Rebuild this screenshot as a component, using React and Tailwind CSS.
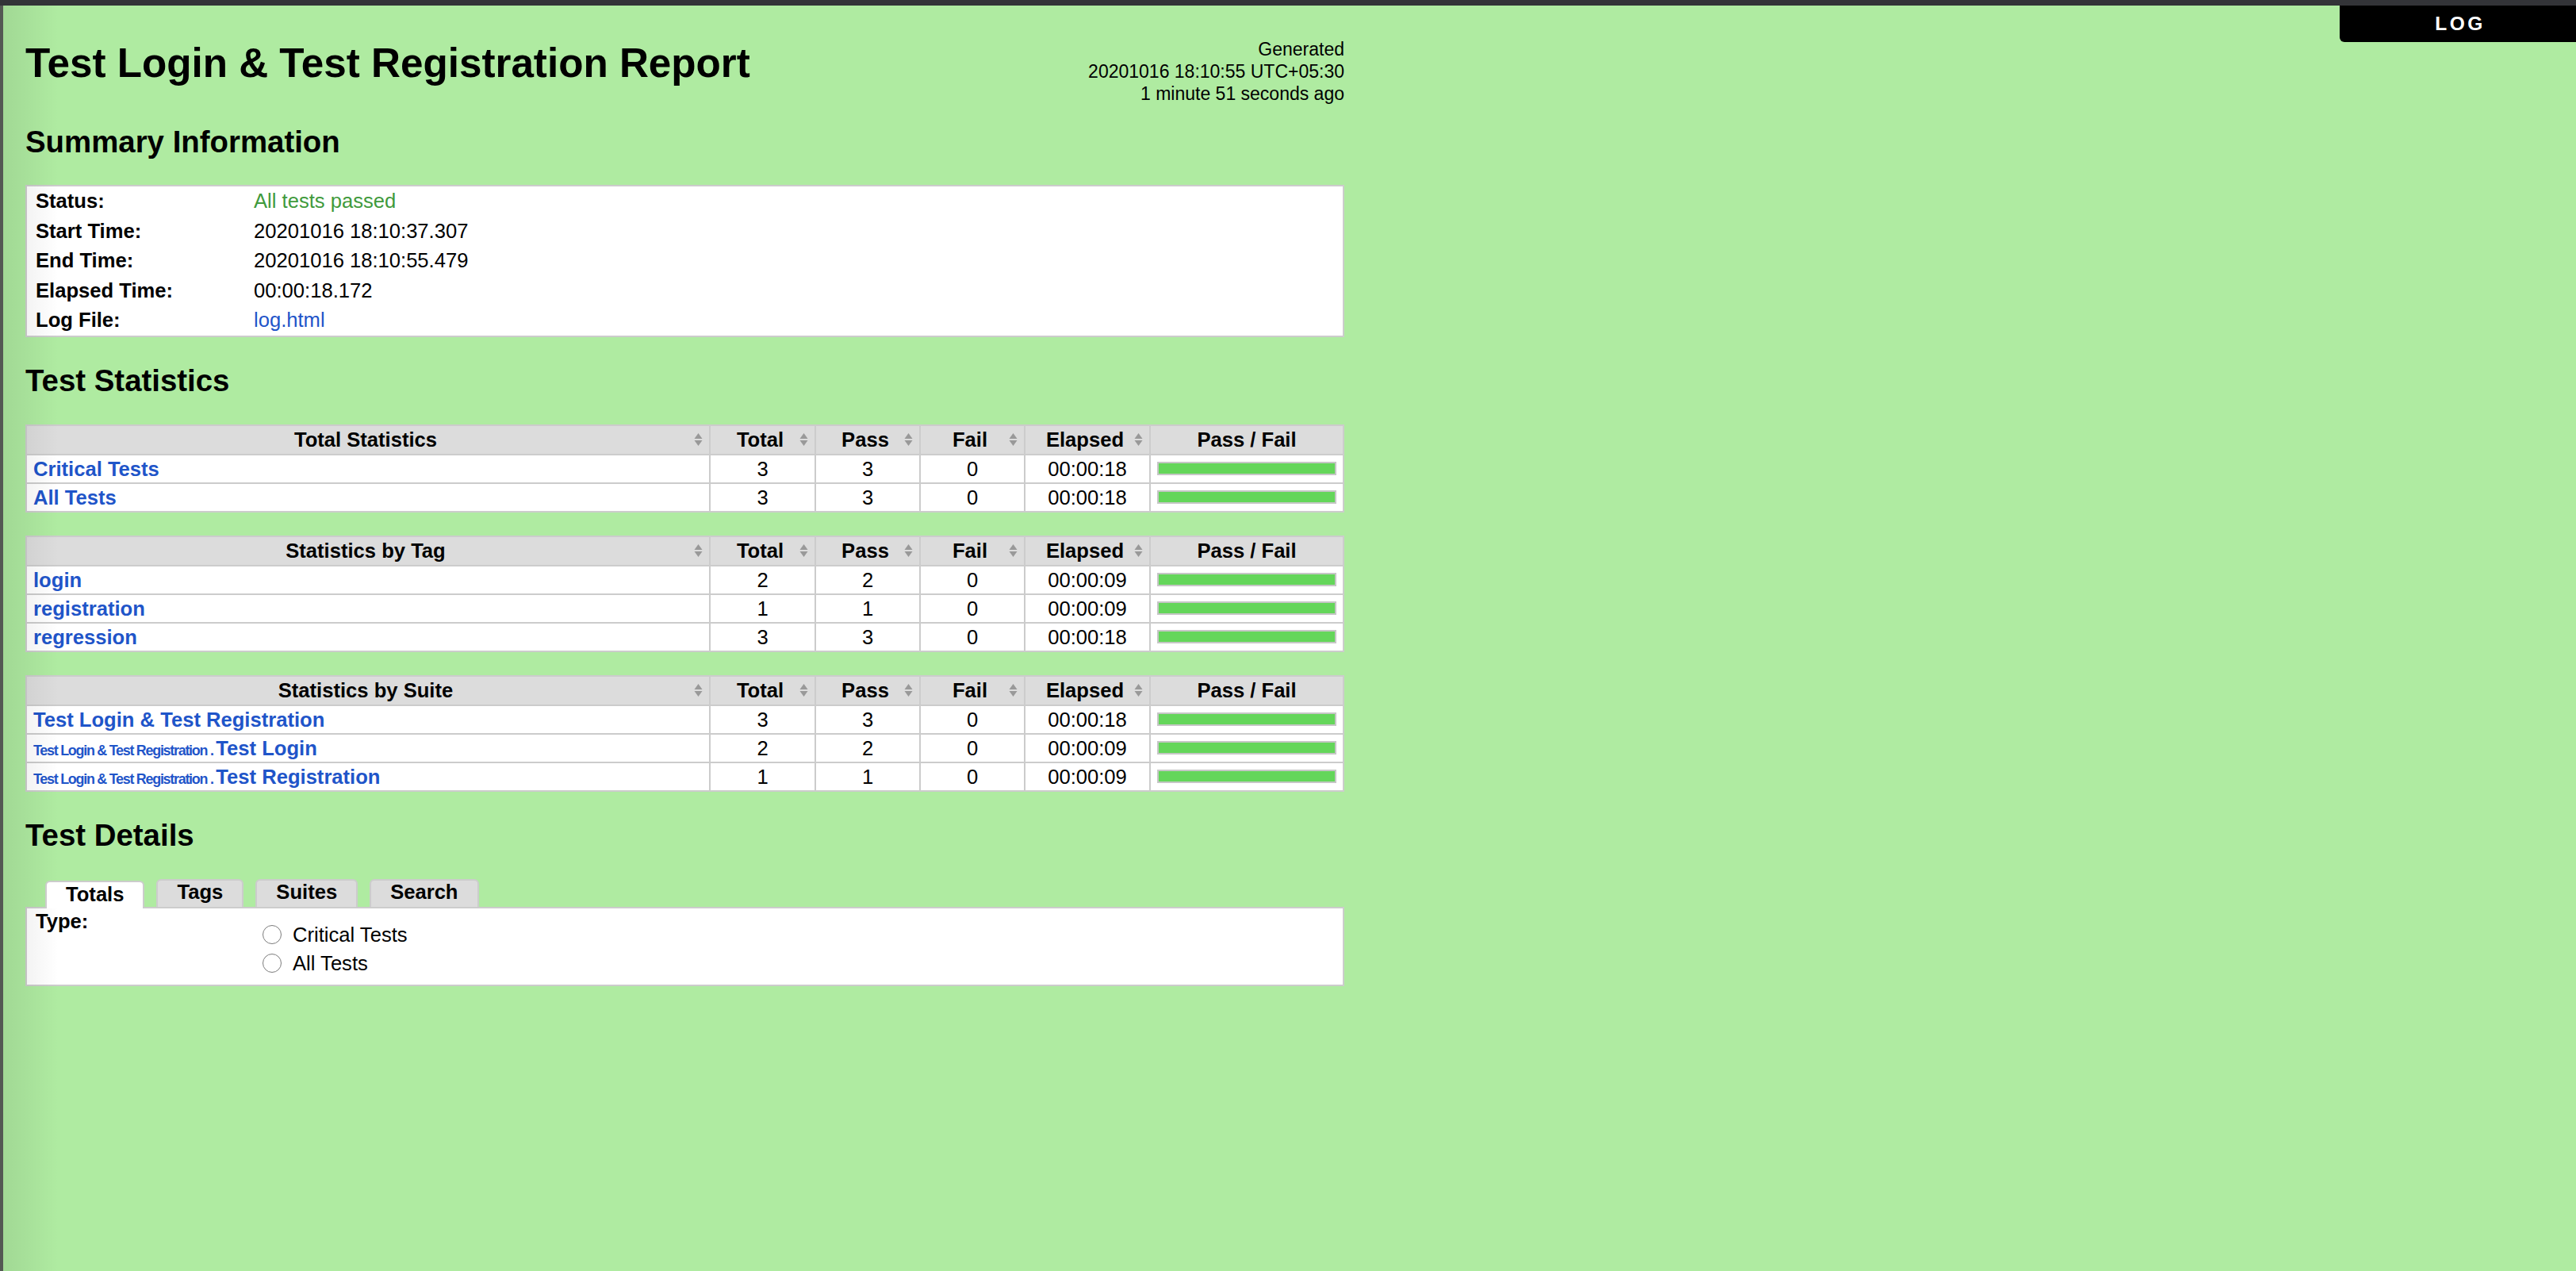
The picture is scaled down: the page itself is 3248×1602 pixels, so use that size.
import React from "react";

// robot-style report page, sized for a 3248px wide window
const FONT = "font-['Liberation_Sans',Arial,Helvetica,sans-serif]";
const COLS = "grid grid-cols-[862px_133px_132px_132px_158px_244px]";
const LINK = "text-[#1f55c9]";

const summary = [
  ["Status:", "All tests passed", "text-[#409a3c]"],
  ["Start Time:", "20201016 18:10:37.307", ""],
  ["End Time:", "20201016 18:10:55.479", ""],
  ["Elapsed Time:", "00:00:18.172", ""],
  ["Log File:", "log.html", LINK],
];

const totalStats = [
  { name: "Critical Tests", total: 3, pass: 3, fail: 0, elapsed: "00:00:18" },
  { name: "All Tests", total: 3, pass: 3, fail: 0, elapsed: "00:00:18" },
];

const tagStats = [
  { name: "login", total: 2, pass: 2, fail: 0, elapsed: "00:00:09" },
  { name: "registration", total: 1, pass: 1, fail: 0, elapsed: "00:00:09" },
  { name: "regression", total: 3, pass: 3, fail: 0, elapsed: "00:00:18" },
];

const suiteStats = [
  { name: "Test Login & Test Registration", total: 3, pass: 3, fail: 0, elapsed: "00:00:18" },
  { parent: "Test Login & Test Registration . ", name: "Test Login", total: 2, pass: 2, fail: 0, elapsed: "00:00:09" },
  { parent: "Test Login & Test Registration . ", name: "Test Registration", total: 1, pass: 1, fail: 0, elapsed: "00:00:09" },
];

function SortArrows() {
  return (
    <svg
      className="absolute right-[8px] top-1/2 -translate-y-1/2"
      width="11"
      height="18"
      viewBox="0 0 11 18"
    >
      <path d="M5.5 1 L10.5 8 H0.5 Z" fill="#999999" />
      <path d="M5.5 17 L10.5 10 H0.5 Z" fill="#999999" />
    </svg>
  );
}

function HeadCell({ label, sortable = true }) {
  return (
    <div
      className={`relative h-[37px] border-r-2 border-b-2 border-[#cccccc] bg-[#dcdcdc] text-center font-bold leading-[35px] ${
        sortable ? "pr-[6px]" : ""
      }`}
    >
      {label}
      {sortable && <SortArrows />}
    </div>
  );
}

function Cell({ children }) {
  return (
    <div className="h-[36px] border-r-2 border-b-2 border-[#cccccc] bg-white text-center leading-[34px]">
      {children}
    </div>
  );
}

function StatTable({ title, rows }) {
  return (
    <div className="w-[1663px] border-l-2 border-t-2 border-[#cccccc]">
      <div className={COLS}>
        <HeadCell label={title} />
        <HeadCell label="Total" />
        <HeadCell label="Pass" />
        <HeadCell label="Fail" />
        <HeadCell label="Elapsed" />
        <HeadCell label="Pass / Fail" sortable={false} />
      </div>
      {rows.map((r) => (
        <div key={(r.parent || "") + r.name} className={COLS}>
          <div
            className={`h-[36px] whitespace-nowrap border-r-2 border-b-2 border-[#cccccc] bg-white pl-[8px] font-bold leading-[34px] ${LINK}`}
          >
            {r.parent && (
              <span className="text-[17.9px] tracking-[-0.07em]">{r.parent}</span>
            )}
            {r.name}
          </div>
          <Cell>{r.total}</Cell>
          <Cell>{r.pass}</Cell>
          <Cell>{r.fail}</Cell>
          <Cell>{r.elapsed}</Cell>
          <div className="flex h-[36px] items-center border-r-2 border-b-2 border-[#cccccc] bg-white px-[8px]">
            <div className="h-[17px] w-full border-2 border-[#c6c6c6] bg-[#64d65a]" />
          </div>
        </div>
      ))}
    </div>
  );
}

export default function App() {
  return (
    <div className={`${FONT} relative min-h-screen bg-[#afeba1] text-[25.6px] text-black`}>
      <div className="h-[7px] bg-[#333438]" />

      <div className="flex min-h-[1595px]">
        <div className="w-[4px] shrink-0 bg-[#535853]" />

        <main className="flex-1 pl-[28px]">
          <div className="w-[1663px]">
            {/* header */}
            <div className="mt-[41px] flex items-start justify-between">
              <h1 className="mt-[6px] text-[51.2px] font-bold leading-[51px]">
                Test Login &amp; Test Registration Report
              </h1>
              <div className="text-right text-[23px] leading-[28px]">
                <div>Generated</div>
                <div>20201016 18:10:55 UTC+05:30</div>
                <div>1 minute 51 seconds ago</div>
              </div>
            </div>

            <h2 className="mt-[28px] text-[38.4px] font-bold leading-[38px]">Summary Information</h2>

            <div className="mt-[35px] border-2 border-[#cccccc] bg-white">
              {summary.map(([k, v, cls]) => (
                <div key={k} className="grid h-[37.6px] grid-cols-[286px_1fr] leading-[37.6px]">
                  <div className="pl-[11px] font-bold">{k}</div>
                  <div className={cls}>{v}</div>
                </div>
              ))}
            </div>

            <h2 className="mt-[36px] text-[38.4px] font-bold leading-[38px]">Test Statistics</h2>

            <div className="mt-[36px]">
              <StatTable title="Total Statistics" rows={totalStats} />
            </div>
            <div className="mt-[29px]">
              <StatTable title="Statistics by Tag" rows={tagStats} />
            </div>
            <div className="mt-[29px]">
              <StatTable title="Statistics by Suite" rows={suiteStats} />
            </div>

            <h2 className="mt-[36px] text-[38.4px] font-bold leading-[38px]">Test Details</h2>

            {/* tabs */}
            <div className="mt-[36px] ml-[25px] flex h-[35px] items-start gap-[15px]">
              <div className="relative top-[2px] z-10 h-[35px] rounded-t-[6px] border-2 border-b-0 border-[#cccccc] bg-white px-[24px] font-bold leading-[31px]">
                Totals
              </div>
              {["Tags", "Suites", "Search"].map((t) => (
                <div
                  key={t}
                  className="h-[35px] rounded-t-[6px] border-2 border-b-0 border-[#cccccc] bg-[#dcdcdc] px-[24px] font-bold leading-[29px]"
                >
                  {t}
                </div>
              ))}
            </div>

            <div className="grid h-[100px] grid-cols-[286px_1fr] border-2 border-[#cccccc] bg-white">
              <div className="pl-[11px] pt-[2px] font-bold leading-[29.4px]">Type:</div>
              <div className="pt-[15px]">
                {["Critical Tests", "All Tests"].map((label) => (
                  <div key={label} className="flex h-[36.3px] items-center leading-[36.3px]">
                    <span className="ml-[11px] h-[24px] w-[24px] rounded-full border-[1.5px] border-[#7c7c7c] bg-white" />
                    <span className="ml-[14px]">{label}</span>
                  </div>
                ))}
              </div>
            </div>
          </div>
        </main>
      </div>

      {/* window edge shade */}
      <div className="pointer-events-none absolute bottom-0 left-[4px] top-[7px] w-[70px] bg-linear-to-r from-black/[0.08] to-transparent" />

      {/* log link */}
      <div className="absolute right-0 top-[7px] flex h-[46px] w-[298px] items-center justify-center rounded-bl-[6px] bg-black pl-[6px] text-[24.5px] font-bold tracking-[3.5px] text-white">
        LOG
      </div>
    </div>
  );
}
